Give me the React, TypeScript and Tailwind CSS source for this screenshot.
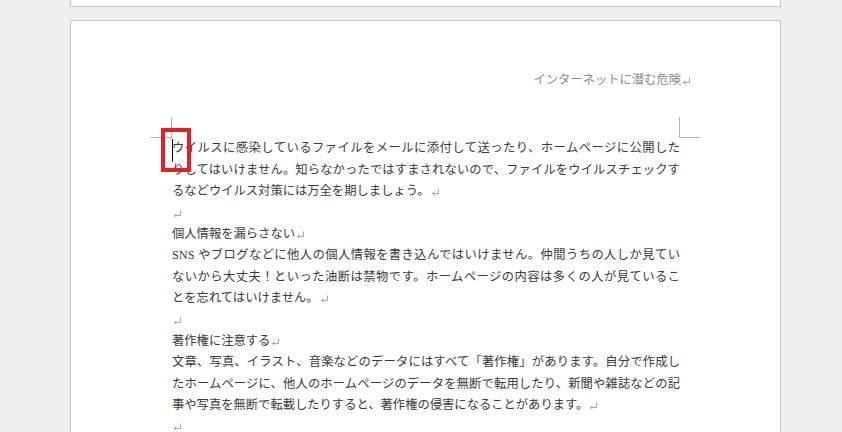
import React from 'react';

// Word の段落記号（↵）
const ParaMark: React.FC = () => (
  <svg
    className="inline-block ml-px align-[-1px]"
    width="9"
    height="8"
    viewBox="0 0 9 8"
    fill="none"
    stroke="#a8a8a8"
    strokeWidth="1"
  >
    <path d="M7.5 0.5V5.5H1.5" />
    <path d="M3.5 3.5L1.5 5.5L3.5 7.5" />
  </svg>
);

type LineProps = {
  children?: React.ReactNode;
  justify?: boolean;
  mark?: boolean;
};

const Line: React.FC<LineProps> = ({ children, justify, mark }) => (
  <div
    className={
      justify
        ? 'h-[21.4px] leading-[21.4px] text-justify [text-align-last:justify]'
        : 'h-[21.4px] leading-[21.4px]'
    }
  >
    {children}
    {mark && <ParaMark />}
  </div>
);

const App: React.FC = () => {
  return (
    <div className="w-[842px] h-[432px] overflow-hidden bg-[#efefef] font-['Liberation_Serif','Noto_Sans_CJK_JP',serif]">
      {/* 前のページの下端 */}
      <div className="ml-[70px] w-[711px] h-[7px] bg-white border-x border-b border-[#c6c6c6]" />

      {/* 現在のページ */}
      <div className="relative mt-[13px] ml-[70px] w-[711px] h-[600px] bg-white border border-[#c6c6c6]">
        {/* ヘッダー */}
        <div className="pt-[49px] pr-[99px] flex justify-end">
          <div className="h-[21.4px] leading-[21.4px] text-[12.3px] text-[#8c8c8c] -mr-[10px]">
            インターネットに潜む危険
            <ParaMark />
          </div>
        </div>

        {/* 本文 */}
        <div className="mt-[47px] ml-[101px] w-[508px] text-[12.3px] text-[#3a3a3a]">
          <Line justify>ウイルスに感染しているファイルをメールに添付して送ったり、ホームページに公開した</Line>
          <Line justify>りしてはいけません。知らなかったではすまされないので、ファイルをウイルスチェックす</Line>
          <Line mark>るなどウイルス対策には万全を期しましょう。</Line>
          <Line mark />
          <Line mark>個人情報を漏らさない</Line>
          <Line justify>SNS やブログなどに他人の個人情報を書き込んではいけません。仲間うちの人しか見てい</Line>
          <Line justify>ないから大丈夫！といった油断は禁物です。ホームページの内容は多くの人が見ているこ</Line>
          <Line mark>とを忘れてはいけません。</Line>
          <Line mark />
          <Line mark>著作権に注意する</Line>
          <Line justify>文章、写真、イラスト、音楽などのデータにはすべて「著作権」があります。自分で作成し</Line>
          <Line justify>たホームページに、他人のホームページのデータを無断で転用したり、新聞や雑誌などの記</Line>
          <Line mark>事や写真を無断で転載したりすると、著作権の侵害になることがあります。</Line>
          <Line mark />
        </div>

        {/* 余白のトンボ */}
        <div className="absolute left-[100px] top-[96px] w-px h-[21px] bg-[#b4b4b4]" />
        <div className="absolute left-[80px] top-[116px] w-[21px] h-px bg-[#b4b4b4]" />
        <div className="absolute left-[608px] top-[96px] w-px h-[21px] bg-[#b4b4b4]" />
        <div className="absolute left-[608px] top-[116px] w-[21px] h-px bg-[#b4b4b4]" />

        {/* カーソル */}
        <div className="absolute left-[101px] top-[118px] w-px h-[23px] bg-black" />

        {/* 強調枠 */}
        <div className="absolute left-[90px] top-[107px] w-[30px] h-[44px] border-4 border-[#e61e25]" />
      </div>
    </div>
  );
};

export default App;
